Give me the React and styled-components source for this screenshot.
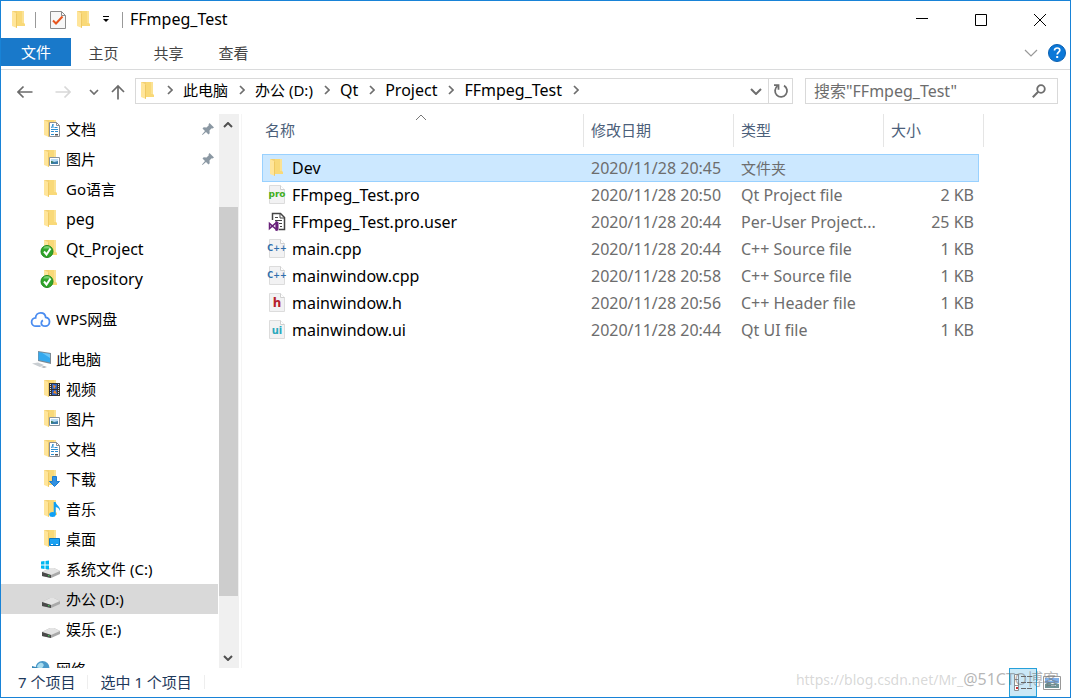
import React from 'react';
import styled, { createGlobalStyle, css } from 'styled-components';

const Global = createGlobalStyle`
  * { box-sizing: border-box; }
  body {
    margin: 0;
    background: #fff;
    font-family: "Noto Sans", "Noto Sans CJK SC", sans-serif;
    font-size: 15px;
    line-height: 20px;
    color: #000;
  }
  button, input { font: inherit; color: inherit; }
  svg { display: block; flex: none; }
`;

const Window = styled.div`
  display: flex;
  flex-direction: column;
  height: 100vh;
  border: 1px solid #1883d7;
  background: #fff;
`;

const PlainButton = styled.button`
  display: flex;
  align-items: center;
  justify-content: center;
  padding: 0;
  border: 0;
  background: none;
`;

/* title bar */
const TitleBar = styled.header`
  display: flex;
  align-items: center;
  height: 37px;
  padding: 0 1px 0 8px;
`;
const QuickButton = styled(PlainButton)`
  width: ${p => p.$w || 26}px;
  height: 24px;
`;
const Rule = styled.span`
  width: 1px;
  height: 16px;
  margin: 0 ${p => p.$after || 0}px 0 ${p => p.$before || 0}px;
  background: #999;
`;
const Title = styled.h1`
  flex: 1;
  margin: 0;
  padding-bottom: 2px;
  font-size: 16px;
  font-weight: 400;
`;
const WindowButton = styled(PlainButton)`
  width: 59px;
  height: 37px;
`;

/* ribbon */
const Ribbon = styled.nav`
  display: flex;
  align-items: flex-start;
  height: 32px;
  border-bottom: 1px solid #dadbdc;
`;
const Tab = styled(PlainButton)`
  width: ${p => (p.$primary ? 70 : 65)}px;
  height: ${p => (p.$primary ? 28 : 30)}px;
  color: ${p => (p.$primary ? '#fff' : '#444')};
  background: ${p => (p.$primary ? '#1979ca' : 'none')};
`;
const RibbonEnd = styled.div`
  display: flex;
  align-items: center;
  gap: 10px;
  height: 30px;
  margin-left: auto;
  padding-right: 4px;
`;

/* address row */
const AddressRow = styled.div`
  display: flex;
  align-items: center;
  height: 44px;
  padding: 0 12px 2px 10px;
`;
const NavButton = styled(PlainButton)`
  width: ${p => p.$w}px;
  height: 26px;
  padding-top: 2px;
`;
const AddressBox = styled.div`
  display: flex;
  flex: 1;
  align-items: center;
  height: 26px;
  margin-right: 12px;
  padding-left: 5px;
  border: 1px solid #d9d9d9;
`;
const Crumbs = styled.ol`
  display: flex;
  flex: 1;
  align-items: center;
  margin: 0;
  padding: 0 0 2px 1px;
  list-style: none;
`;
const Crumb = styled.li`
  display: flex;
  align-items: center;
  font-size: ${p => (p.$latin ? 16 : 15)}px;
  a { color: inherit; text-decoration: none; }
  svg { margin: 0 10px 0 11px; }
`;
const BoxButton = styled(PlainButton)`
  width: 24px;
  height: 24px;
  border-left: ${p => (p.$ruled ? '1px solid #d9d9d9' : '0')};
`;
const SearchBox = styled.label`
  display: flex;
  align-items: center;
  width: 253px;
  height: 26px;
  padding: 0 11px 0 8px;
  border: 1px solid #d9d9d9;
`;
const SearchInput = styled.input`
  flex: 1;
  min-width: 0;
  height: 22px;
  padding: 0;
  border: 0;
  outline: 0;
  background: none;
  font-size: 16px;
  &::placeholder { color: #6d6d6d; opacity: 1; }
`;

/* body */
const Body = styled.div`
  display: flex;
  flex: 1;
  min-height: 0;
`;
const Sidebar = styled.nav`
  width: 217px;
  overflow: hidden;
`;
const Group = styled.ul`
  margin: 0 0 10px;
  padding: 0;
  list-style: none;
`;
const TreeLink = styled.a`
  display: flex;
  align-items: center;
  gap: 5px;
  height: 30px;
  padding: 0 3px 0 ${p => (p.$root ? 29 : 39)}px;
  font-size: ${p => (p.$latin ? 16 : 15)}px;
  color: inherit;
  text-decoration: none;
  background: ${p => (p.$active ? '#d9d9d9' : 'none')};
`;
const TreeText = styled.span`
  flex: 1;
  white-space: nowrap;
`;
const ScrollBar = styled.div`
  display: flex;
  flex-direction: column;
  width: 20px;
  margin: 0 2px 0 1px;
  background: #f0f0f0;
`;
const ScrollButton = styled(PlainButton)`
  width: 18px;
  height: 21px;
`;
const ScrollGap = styled.div`
  flex: ${p => p.$share};
`;
const ScrollThumb = styled.div`
  flex: 389;
  width: 19px;
  background: #cdcdcd;
`;
const Main = styled.main`
  flex: 1;
  min-width: 0;
  padding-left: 20px;
  border-left: 1px solid #f5f5f5;
  overflow: hidden;
`;
const FileTable = styled.table`
  width: 722px;
  table-layout: fixed;
  border-spacing: 0;
`;
const HeadCell = styled.th`
  position: relative;
  height: 40px;
  padding: 0;
  font-weight: 400;
  text-align: left;
  vertical-align: top;
  color: #4c607a;
  > div {
    height: 33px;
    padding: 6px 0 0 ${p => (p.$first ? 3 : 7)}px;
    border-right: 1px solid #e5e5e5;
  }
  > svg {
    position: absolute;
    top: 0;
    left: 50%;
    margin-left: -8px;
  }
`;
const selectedCell = css`
  padding-bottom: 0;
  background: #cce8ff;
  border-top: 1px solid #99d1ff;
  border-bottom: 1px solid #99d1ff;
  &:first-child { padding-left: 5px; border-left: 1px solid #99d1ff; }
  &:nth-child(4) { border-right: 1px solid #99d1ff; }
`;
const Cell = styled.td`
  height: ${p => (p.$selected ? 28 : 27)}px;
  padding: 0 5px 2px ${p => (p.$name ? 6 : 7)}px;
  overflow: hidden;
  text-overflow: ellipsis;
  white-space: nowrap;
  font-size: ${p => (p.$small ? 15 : 16)}px;
  text-align: ${p => (p.$right ? 'right' : 'left')};
  color: ${p => (p.$name ? '#000' : '#6d6d6d')};
  ${p => p.$selected && selectedCell}
`;
const FileName = styled.span`
  display: flex;
  align-items: center;
  gap: 6px;
`;

/* status bar */
const StatusBar = styled.footer`
  position: relative;
  display: flex;
  align-items: center;
  height: 29px;
  padding-left: 17px;
  color: #1e395b;
`;
const StatusText = styled.span`
  padding-right: 12px;
  margin: 0 12px 2px 0;
  border-right: 1px solid #eee;
  line-height: 14px;
`;
const Views = styled.div`
  display: flex;
  height: 29px;
  margin-left: auto;
  padding-right: 3px;
`;
const ViewButton = styled(PlainButton)`
  width: ${p => (p.$on ? 28 : 30)}px;
  background: ${p => (p.$on ? '#cbe8f6' : 'none')};
  border: ${p => (p.$on ? '1px solid #26a0da' : '0')};
`;
const Watermark = styled.div`
  position: absolute;
  right: 11px;
  bottom: 7px;
  font-size: 14px;
  color: rgba(120, 120, 120, 0.3);
  white-space: nowrap;
  pointer-events: none;
  b { font-size: 16px; font-weight: 400; color: rgba(110, 110, 110, 0.5); }
`;

/* icons */
const FolderShape = () => (
  <>
    <path d="M4 0h8v12l1 1v2H4z" fill="#f9d978" />
    <path d="M10 0h2v12h-2z" fill="#fbe294" />
    <path d="M0 0h3l2 3v14l-5-2z" fill="#ffe59a" />
    <path d="M0 0h5v3l-1-1z" fill="#f3d072" />
    <path d="M4 2l1 1v14l-1-.5z" fill="#efc963" />
  </>
);
const Folder = () => (
  <svg width="14" height="18" viewBox="0 0 14 18"><FolderShape /></svg>
);

const TreeIcon = ({ kind }) => (
  <svg width="21" height="20" viewBox="0 0 21 20">
    {!['drive', 'windrive', 'pc', 'cloud', 'net'].includes(kind) && (
      <g transform="translate(4 1)"><FolderShape /></g>
    )}
    {kind === 'doc' && (
      <g>
        <path d="M9.500 3.500h7l3 3v11h-10z" fill="#fff" stroke="#8a8f94" />
        <path d="M16.500 3.500v3h3" fill="none" stroke="#8a8f94" />
        <path d="M11.500 9l1.500-4v4M14.500 8.500h3M11 10.500h7M11 12.500h3M15 12.500h3M11 15.500h3" stroke="#2e8fd0" fill="none" />
        <path d="M15 15h3v1.500h-3z" fill="#555" />
      </g>
    )}
    {kind === 'image' && (
      <g>
        <path d="M9.500 8.500h10v8h-10z" fill="#fff" stroke="#8a949c" />
        <path d="M11 10h7v3h-7z" fill="#b8dcf5" />
        <path d="M11 15v-3l3 1 4-1v3z" fill="#3b7ca8" />
        <path d="M11 12l3 1-3 1z" fill="#3a7d4f" />
      </g>
    )}
    {kind === 'sync' && (
      <g>
        <circle cx="7" cy="12.500" r="6" fill="#30a52a" stroke="#1f8a1c" />
        <path d="M3 9.500a4.500 4.500 0 0 1 8 0z" fill="#7ccf70" />
        <path d="M4 12.500l2.500 3 4-6" stroke="#fff" strokeWidth="2" fill="none" />
      </g>
    )}
    {kind === 'video' && (
      <g>
        <path d="M9 4h11v13H9z" fill="#333" />
        <path d="M12 5h5v5h-5z" fill="#2d62c4" />
        <path d="M12 11h5v5h-5z" fill="#2d62c4" />
        <path d="M13 6l3 1-2 3zM13 14l2-3 2 4z" fill="#f08b24" />
        <path d="M10.500 5v12M18.500 5v12" stroke="#ddd" strokeWidth="1" strokeDasharray="1 1" />
      </g>
    )}
    {kind === 'download' && (
      <path d="M12.500 7.500h4v5h3l-5 5-5-5h3z" fill="#3191e0" stroke="#1c7cd0" />
    )}
    {kind === 'music' && (
      <g fill="#0fa0f5">
        <ellipse cx="12.500" cy="15.500" rx="3.200" ry="2.500" />
        <path d="M13.700 3h2c0 3 5 4 4.300 9-.8-2-1.800-3.500-4.300-4v8h-2z" />
      </g>
    )}
    {kind === 'desktop' && (
      <g>
        <path d="M9.500 9.500h10v7h-10z" fill="#1ba1f2" stroke="#0877c4" />
        <path d="M11 15.500h2M16 15.500h2" stroke="#fff" />
      </g>
    )}
    {(kind === 'drive' || kind === 'windrive') && (
      <g>
        <path d="M2 13l8-4h4l6 3v3l-9 4-9-2z" fill="#a9a9a9" />
        <path d="M2 13l8-4h4l6 3-9 4z" fill="#e4e4e4" />
        <path d="M2 13l9 3v3l-9-2z" fill="#4a4a4a" />
        <path d="M8 16l1.500.5v1L8 17z" fill="#3ddc57" />
      </g>
    )}
    {kind === 'windrive' && (
      <path d="M1 2.500l3.500-.5v3.500H1zM5.500 2L9 1.500v4H5.500zM1 6.500h3.500V10L1 9.500zM5.500 6.500H9v4l-3.500-.5z" fill="#00b7f1" />
    )}
    {kind === 'cloud' && (
      <path
        d="M10.500 17.200H6a4.200 4.200 0 0 1-.4-8.400C5.700 5.700 8 3.800 10.700 3.800s4.700 1.900 5 4.600c2.300.4 3.800 2.100 3.800 4.300 0 2.600-2 4.500-4.200 4.500-2.600 0-4-1.400-4-3.200 0-1.200.7-2.200 1.700-2.600"
        fill="none" stroke="#4a8cf0" strokeWidth="1.800"
      />
    )}
    {kind === 'pc' && (
      <g>
        <path d="M8 2l13 2v11L8 12z" fill="#7e8a94" />
        <path d="M8.500 3L20 5v8.500L8.500 11z" fill="#35a9ee" />
        <path d="M12 3.700L20 5v4z" fill="#6fc6f7" />
        <path d="M2 14.500l6-1 6 2.500-4 2z" fill="#c9ced2" />
        <path d="M11 18l3-1 3 1-3 1z" fill="#aab0b5" />
      </g>
    )}
    {kind === 'net' && (
      <g>
        <circle cx="12.500" cy="9" r="7" fill="#4b9ac9" />
        <path d="M8.500 5c3-3 6 0 5 2s-3 4-5 3-2-3 0-5z" fill="#a9dcef" />
        <path d="M2 7l7 2v7l-7-2z" fill="#3585b5" />
      </g>
    )}
  </svg>
);

const Pin = () => (
  <svg width="14" height="14" viewBox="0 0 14 14">
    <path d="M8.500 1l4.500 4.500-1.500 1-.8-.3-2.200 2.300.2 2.800-1.200 1.200L5 10 1.500 13 1 12.500 4 9 1.500 6.500l1.200-1.200 2.800.2L7.800 3.300 7.500 2.500z" fill="#8b98a3" />
  </svg>
);

const Chevron = ({ dir = 'right', size = 5, color = '#6e6e6e', weight = 1.7 }) => {
  const s = size;
  const flat = dir === 'right';
  const d = { right: `M1 1l${s - 1} ${s - 1}-${s - 1} ${s - 1}`, down: `M1 1l${s} ${s} ${s}-${s}`, up: `M1 ${s + 1}l${s}-${s} ${s} ${s}` }[dir];
  return (
    <svg width={flat ? s + 1 : s * 2 + 2} height={flat ? s * 2 : s + 2}>
      <path d={d} fill="none" stroke={color} strokeWidth={weight} />
    </svg>
  );
};

const Arrow = ({ dir, color }) => (
  <svg width="16" height="16" viewBox="0 0 16 16">
    <path
      d={{ left: 'M15.500 8H1M6.500 2.500L1 8l5.500 5.500', right: 'M.5 8H15M9.500 2.500L15 8l-5.500 5.500', up: 'M8 15.500V2M2 8l6-6 6 6' }[dir]}
      fill="none" stroke={color} strokeWidth="1.700"
    />
  </svg>
);

const Mark = styled.text`
  font-family: "DejaVu Sans", sans-serif;
  font-weight: 700;
`;
const FileIcon = ({ kind }) => {
  if (kind === 'folder') {
    return <svg width="18" height="20" viewBox="0 0 18 20"><g transform="translate(2 1)"><FolderShape /></g></svg>;
  }
  if (kind === 'vs') {
    return (
      <svg width="18" height="20" viewBox="0 0 18 20">
        <path d="M4.500 8V1.500h8l4 4v12H11" fill="#fff" stroke="#444" strokeWidth="1.500" />
        <path d="M12 1.500V6h4.500M7 5.500h3M7 8.500h7M11 11.500h3M12 14.500h2" fill="none" stroke="#444" />
        <path d="M1.500 11.500v5l7-6v7z" fill="none" stroke="#68217a" strokeWidth="1.500" />
        <path d="M7.500 9l3 1.200v8L7.500 19z" fill="#68217a" />
      </svg>
    );
  }
  const [text, color, size] = {
    pro: ['pro', '#3fae20', 9],
    cpp: ['C++', '#2f6fae', 8],
    h: ['h', '#b5202c', 12],
    ui: ['ui', '#2aa9bd', 10],
  }[kind];
  return (
    <svg width="18" height="20" viewBox="0 0 18 20" overflow="visible">
      <path d="M1.500.5h11l4 4v14h-15z" fill="#f2f2f3" stroke="#dcdcdc" />
      <path d="M12.500.5v4h4" fill="#fff" stroke="#d0d0d0" />
      <Mark x="9" y={kind === 'h' || kind === 'ui' ? 14 : 12} textAnchor="middle" fontSize={size} fill={color}>{text}</Mark>
    </svg>
  );
};

const isLatin = text => /^[\x20-\x7e]*$/.test(text);

const groups = [
  [
    ['doc', '文档', 'pin'], ['image', '图片', 'pin'], ['folder', 'Go语言'], ['folder', 'peg'],
    ['sync', 'Qt_Project'], ['sync', 'repository'],
  ],
  [['cloud', 'WPS网盘', 'root']],
  [
    ['pc', '此电脑', 'root'], ['video', '视频'], ['image', '图片'], ['doc', '文档'], ['download', '下载'],
    ['music', '音乐'], ['desktop', '桌面'], ['windrive', '系统文件 (C:)'], ['drive', '办公 (D:)', 'active'],
    ['drive', '娱乐 (E:)'],
  ],
  [['net', '网络', 'root']],
];

const files = [
  ['folder', 'Dev', '2020/11/28 20:45', '文件夹', ''],
  ['pro', 'FFmpeg_Test.pro', '2020/11/28 20:50', 'Qt Project file', '2 KB'],
  ['vs', 'FFmpeg_Test.pro.user', '2020/11/28 20:44', 'Per-User Project...', '25 KB'],
  ['cpp', 'main.cpp', '2020/11/28 20:44', 'C++ Source file', '1 KB'],
  ['cpp', 'mainwindow.cpp', '2020/11/28 20:58', 'C++ Source file', '1 KB'],
  ['h', 'mainwindow.h', '2020/11/28 20:56', 'C++ Header file', '1 KB'],
  ['ui', 'mainwindow.ui', '2020/11/28 20:44', 'Qt UI file', '1 KB'],
];

export default function App() {
  return (
    <Window>
      <Global />
      <TitleBar>
        <QuickButton $w={20} aria-label="窗口菜单"><Folder /></QuickButton>
        <Rule $before={6} $after={9} />
        <QuickButton aria-label="属性">
          <svg width="16" height="18" viewBox="0 0 16 18">
            <path d="M.5.5h11l4 4v13H.5z" fill="#f7f7f7" stroke="#8c8c8c" />
            <path d="M11.500.5v4h4" fill="none" stroke="#8c8c8c" />
            <path d="M3 9.500l3 3 6.500-7" fill="none" stroke="#e8561e" strokeWidth="2" />
          </svg>
        </QuickButton>
        <QuickButton aria-label="新建文件夹"><Folder /></QuickButton>
        <QuickButton $w={18} aria-label="自定义快速访问工具栏">
          <svg width="8" height="7"><path d="M1 .5h6" stroke="#000" /><path d="M1 3h6L4 6z" /></svg>
        </QuickButton>
        <Rule $before={7} $after={7} />
        <Title>FFmpeg_Test</Title>
        <WindowButton aria-label="最小化"><svg width="12" height="12"><path d="M0 4.500h12" stroke="#000" /></svg></WindowButton>
        <WindowButton aria-label="最大化"><svg width="12" height="12"><path d="M.5.500h11v11H.5z" fill="none" stroke="#000" /></svg></WindowButton>
        <WindowButton aria-label="关闭"><svg width="12" height="12"><path d="M0 0l12 12M12 0L0 12" stroke="#000" /></svg></WindowButton>
      </TitleBar>

      <Ribbon>
        <Tab $primary>文件</Tab>
        <Tab>主页</Tab>
        <Tab>共享</Tab>
        <Tab>查看</Tab>
        <RibbonEnd>
          <PlainButton aria-label="展开功能区"><Chevron dir="down" size={6} color="#999" weight={1.2} /></PlainButton>
          <PlainButton aria-label="帮助">
            <svg width="18" height="18">
              <circle cx="9" cy="9" r="8.500" fill="#0b78d8" stroke="#0a5fb0" />
              <path d="M6.500 6.500c0-3.500 5.300-3 5.300-.3 0 1.800-2.600 2-2.600 4.300" fill="none" stroke="#fff" strokeWidth="1.700" />
              <path d="M8.200 12h2v2h-2z" fill="#fff" />
            </svg>
          </PlainButton>
        </RibbonEnd>
      </Ribbon>

      <AddressRow>
        <NavButton $w={28} aria-label="后退"><Arrow dir="left" color="#6b6b6b" /></NavButton>
        <NavButton $w={48} aria-label="前进"><Arrow dir="right" color="#d8d8d8" /></NavButton>
        <NavButton $w={14} aria-label="最近位置"><Chevron dir="down" size={4} /></NavButton>
        <NavButton $w={34} aria-label="上一级"><Arrow dir="up" color="#6b6b6b" /></NavButton>
        <AddressBox>
          <Folder />
          <Crumbs>
            {['', '此电脑', '办公 (D:)', 'Qt', 'Project', 'FFmpeg_Test'].map(name => (
              <Crumb key={name} $latin={isLatin(name)}>{name && <a href="#path">{name}</a>}<Chevron /></Crumb>
            ))}
          </Crumbs>
          <BoxButton aria-label="历史位置"><Chevron dir="down" weight={2} /></BoxButton>
          <BoxButton $ruled aria-label="刷新">
            <svg width="16" height="16" viewBox="0 0 16 16">
              <path d="M4.500 3A6 6 0 1 0 11 2.600" fill="none" stroke="#6e6e6e" strokeWidth="1.800" />
              <path d="M1 2.200h4.500v4.500" fill="none" stroke="#6e6e6e" strokeWidth="1.800" />
            </svg>
          </BoxButton>
        </AddressBox>
        <SearchBox>
          <SearchInput type="text" aria-label="搜索" placeholder={'搜索"FFmpeg_Test"'} />
          <svg width="14" height="14" viewBox="0 0 14 14">
            <circle cx="9" cy="5" r="3.800" fill="none" stroke="#6e6e6e" strokeWidth="1.800" />
            <path d="M6.200 7.800L.8 13.200" stroke="#6e6e6e" strokeWidth="2" />
          </svg>
        </SearchBox>
      </AddressRow>

      <Body>
        <Sidebar>
          {groups.map((items, g) => (
            <Group key={g}>
              {items.map(([kind, text, flag]) => (
                <li key={text}>
                  <TreeLink href="#folder" $root={flag === 'root'} $active={flag === 'active'} $latin={isLatin(text)}>
                    <TreeIcon kind={kind} />
                    <TreeText>{text}</TreeText>
                    {flag === 'pin' && <Pin />}
                  </TreeLink>
                </li>
              ))}
            </Group>
          ))}
        </Sidebar>
        <ScrollBar>
          <ScrollButton aria-label="向上滚动"><Chevron dir="up" size={4} color="#505050" weight={2} /></ScrollButton>
          <ScrollGap $share={72} />
          <ScrollThumb />
          <ScrollGap $share={51} />
          <ScrollButton aria-label="向下滚动"><Chevron dir="down" size={4} color="#505050" weight={2} /></ScrollButton>
        </ScrollBar>
        <Main>
          <FileTable>
            <colgroup>
              <col width="322" /><col width="150" /><col width="150" /><col width="95" /><col width="5" />
            </colgroup>
            <thead>
              <tr>
                <HeadCell $first><div>名称</div><Chevron dir="up" color="#777" weight={1} /></HeadCell>
                <HeadCell><div>修改日期</div></HeadCell>
                <HeadCell><div>类型</div></HeadCell>
                <HeadCell colSpan={2}><div>大小</div></HeadCell>
              </tr>
            </thead>
            <tbody>
              {files.map(([kind, name, date, type, size], i) => (
                <tr key={name}>
                  <Cell $name $selected={i === 0}><FileName><FileIcon kind={kind} />{name}</FileName></Cell>
                  <Cell $selected={i === 0}>{date}</Cell>
                  <Cell $selected={i === 0} $small={!isLatin(type)}>{type}</Cell>
                  <Cell $right $selected={i === 0}>{size}</Cell>
                </tr>
              ))}
            </tbody>
          </FileTable>
        </Main>
      </Body>

      <StatusBar>
        <StatusText>7 个项目</StatusText>
        <StatusText>选中 1 个项目</StatusText>
        <Views>
          <ViewButton $on aria-label="详细信息">
            <svg width="18" height="17">
              <path d="M.5.500h4v16h-4zM.5 5.500h4M.5 11.500h4" fill="#fff" stroke="#8a8f94" />
              <path d="M7 2.500h5M13 2.500h5M7 8.500h5M13 8.500h5M7 14.500h5M13 14.500h5" stroke="#666" />
              <path d="M2 13h2v2H2z" fill="#c33" />
            </svg>
          </ViewButton>
          <ViewButton aria-label="大图标">
            <svg width="18" height="14">
              <path d="M.5.500h17v13H.5z" fill="#fff" stroke="#999" />
              <path d="M2 2h14v5H2z" fill="#7fb0e8" />
              <path d="M2 8l4-2 3 2 4-1 3 1v4H2z" fill="#6f9396" />
              <path d="M5 4h4v1H5zM8 9h5v1H8z" fill="#dfeefa" />
            </svg>
          </ViewButton>
        </Views>
        <Watermark>https://blog.csdn.net/Mr_<b>@51CTO博客</b></Watermark>
      </StatusBar>
    </Window>
  );
}
